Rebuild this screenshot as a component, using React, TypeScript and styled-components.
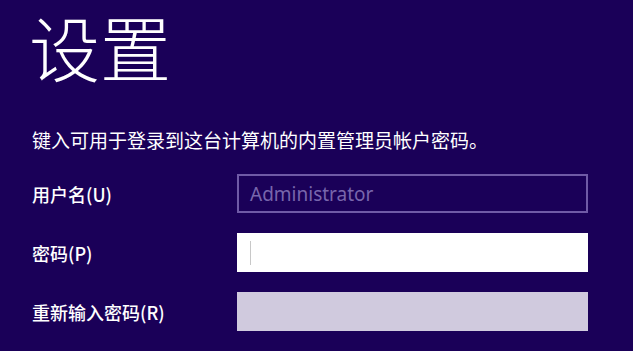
import React from "react";
import styled, { createGlobalStyle } from "styled-components";

const Global = createGlobalStyle`
  html, body { margin: 0; padding: 0; background: #1a0058; }
  body { font-family: "Noto Sans CJK SC", "Noto Sans", sans-serif; }
`;

const Page = styled.div`
  width: 633px;
  height: 351px;
  background: #1a0058;
  padding: 0 0 0 32px;
  box-sizing: border-box;
  overflow: hidden;
  color: #ffffff;
`;

const Title = styled.h1`
  margin: 0 0 0 -3px;
  padding-top: 0;
  font-family: "Noto Sans CJK SC", sans-serif;
  font-weight: 300;
  font-size: 71px;
  line-height: 90px;
`;

const Intro = styled.p`
  margin: 38px 0 0 0;
  font-size: 19px;
  line-height: 24px;
  font-family: "Noto Sans CJK SC", sans-serif;
`;

const Form = styled.div`
  display: grid;
  grid-template-columns: 205px 351px;
  grid-auto-rows: 39px;
  row-gap: 20px;
  margin-top: 22px;
  align-items: center;
`;

const Label = styled.label`
  font-size: 18px;
  line-height: 24px;
  font-weight: 500;
  font-family: "Noto Sans CJK SC", sans-serif;
`;

const Field = styled.div<{ $variant: "readonly" | "active" | "disabled" }>`
  height: 39px;
  box-sizing: border-box;
  display: flex;
  align-items: center;
  padding-left: 11px;
  background: ${(p) =>
    p.$variant === "readonly" ? "transparent" : p.$variant === "active" ? "#ffffff" : "#d0cade"};
  border: 2px solid
    ${(p) => (p.$variant === "readonly" ? "#6f5aa6" : p.$variant === "active" ? "#ffffff" : "#d0cade")};
  font-family: "Noto Sans", "Open Sans", sans-serif;
  font-size: 19px;
  color: #7866ac;
`;

const Caret = styled.span`
  display: block;
  width: 1px;
  height: 24px;
  background: #c8c8c8;
`;

export default function App() {
  return (
    <>
      <Global />
      <Page>
        <Title>设置</Title>
        <Intro>键入可用于登录到这台计算机的内置管理员帐户密码。</Intro>
        <Form>
          <Label>用户名(U)</Label>
          <Field $variant="readonly">Administrator</Field>
          <Label>密码(P)</Label>
          <Field $variant="active">
            <Caret />
          </Field>
          <Label>重新输入密码(R)</Label>
          <Field $variant="disabled" />
        </Form>
      </Page>
    </>
  );
}
